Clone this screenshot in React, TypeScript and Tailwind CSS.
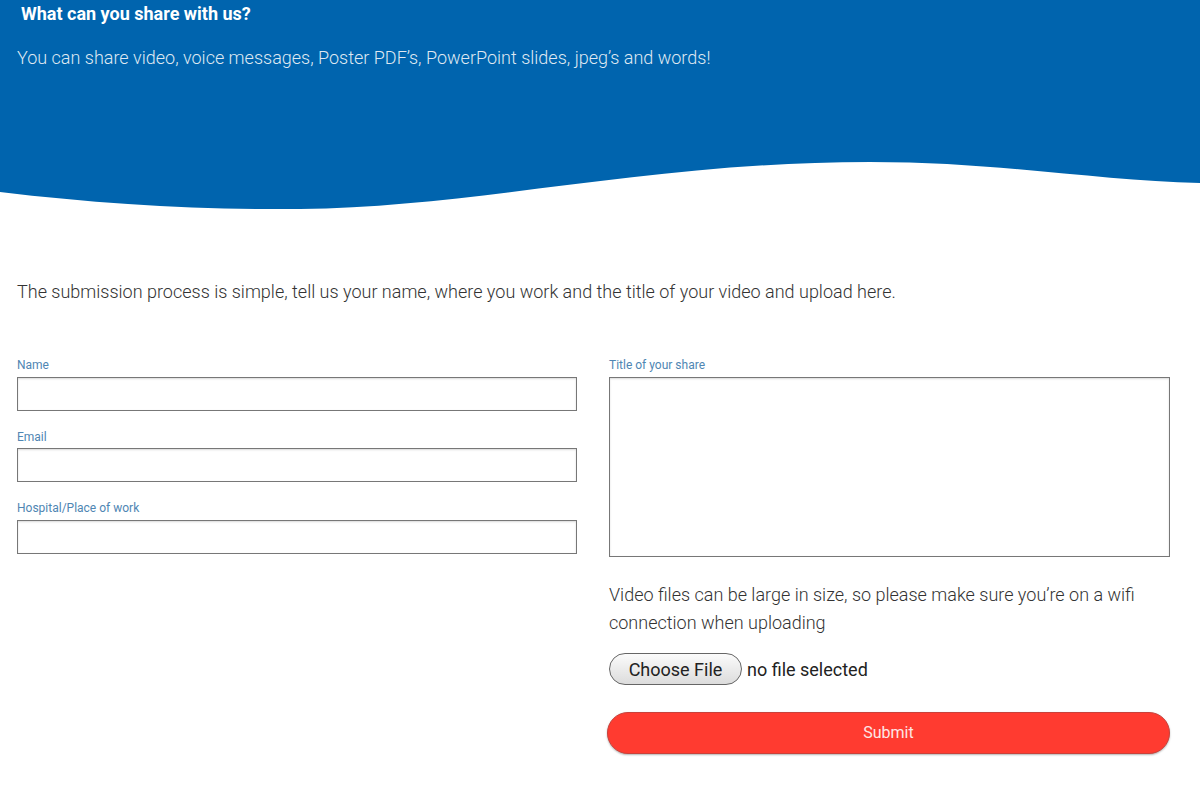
import React from "react";

export default function App() {
  const font = { fontFamily: "Roboto, 'Noto Sans', sans-serif" };
  return (
    <div className="w-[1200px] h-[786px] bg-white overflow-hidden" style={font}>
      <div className="bg-[#0064ae] h-[160px] px-[17px] pt-[3px]">
        <h1 className="text-white font-bold text-[18px] leading-[22px] pl-[4px]">What can you share with us?</h1>
        <p className="mt-[22px] text-[#dfe8f2] text-[18px] font-light leading-[22px]">
          You can share video, voice messages, Poster PDF’s, PowerPoint slides, jpeg’s and words!
        </p>
      </div>
      <svg width="1200" height="52" viewBox="0 0 1200 52" className="block">
        <path
          d="M0,32 C100,44 200,50 300,49 C480,47 650,2 870,2 C1000,2 1100,21 1200,23 L1200,0 L0,0 Z"
          fill="#0064ae"
        />
      </svg>
      <p className="mt-[69px] px-[17px] text-[18px] leading-[22px] text-[#333] font-light">
        The submission process is simple, tell us your name, where you work and the title of your video and upload here.
      </p>
      <div className="mt-[55px] px-[17px] flex gap-[32px]">
        <div className="w-[560px] flex flex-col">
          <label className="text-[12px] leading-[14px] text-[#4f86b3]">Name</label>
          <input className="mt-[5px] h-[34px] border border-[#777] shadow-[inset_0_1px_2px_rgba(0,0,0,0.15)]" />
          <label className="mt-[19px] text-[12px] leading-[14px] text-[#4f86b3]">Email</label>
          <input className="mt-[4px] h-[34px] border border-[#777] shadow-[inset_0_1px_2px_rgba(0,0,0,0.15)]" />
          <label className="mt-[19px] text-[12px] leading-[14px] text-[#4f86b3]">Hospital/Place of work</label>
          <input className="mt-[5px] h-[34px] border border-[#777] shadow-[inset_0_1px_2px_rgba(0,0,0,0.15)]" />
        </div>
        <div className="w-[561px] flex flex-col">
          <label className="text-[12px] leading-[14px] text-[#4f86b3]">Title of your share</label>
          <textarea className="mt-[5px] h-[180px] border border-[#777] resize-none shadow-[inset_0_1px_2px_rgba(0,0,0,0.15)]" />
          <p className="mt-[24px] text-[18px] leading-[28px] text-[#333] font-light pr-[20px]">
            Video files can be large in size, so please make sure you’re on a wifi connection when uploading
          </p>
          <div className="mt-[16px] flex items-center">
            <button className="h-[32px] w-[133px] rounded-full border border-[#666] bg-gradient-to-b from-[#fbfbfb] to-[#dcdcdc] text-[18px] text-[#222]">
              Choose File
            </button>
            <span className="ml-[5px] text-[18px] text-[#222]">no file selected</span>
          </div>
          <button className="mt-[27px] -ml-[2px] w-[563px] h-[42px] rounded-full bg-[#ff3b30] border border-[#c9413a] shadow-[0_1px_2px_rgba(0,0,0,0.3)] text-[16px] text-[#fde7e5]">
            Submit
          </button>
        </div>
      </div>
    </div>
  );
}
